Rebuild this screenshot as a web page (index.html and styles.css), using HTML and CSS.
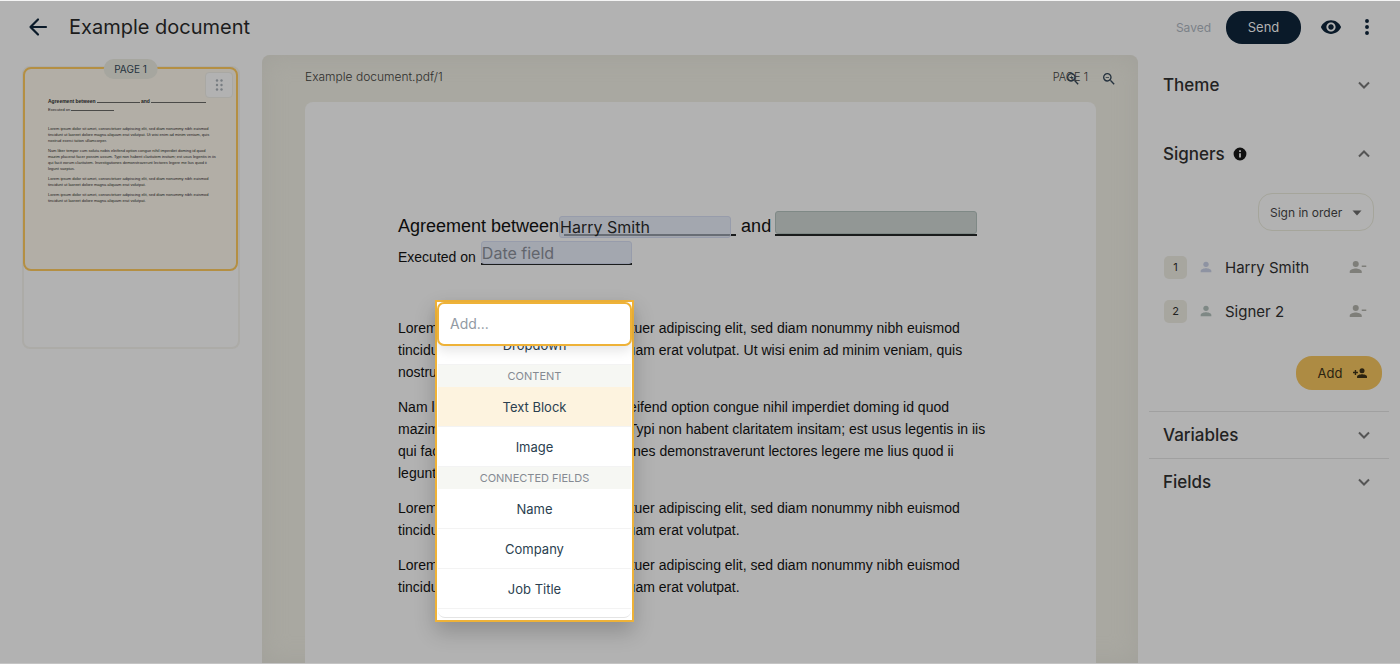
FILE: index.html
```html
<!DOCTYPE html>
<html lang="en">
<head>
<meta charset="utf-8">
<title>Example document</title>
<link rel="stylesheet" href="styles.css">
</head>
<body>
<header class="topbar">
  <button class="icon-btn back" aria-label="Back"><svg width="24" height="24" viewBox="0 0 24 24" fill="none" stroke="currentColor" stroke-width="2.2" stroke-linecap="round" stroke-linejoin="round"><path d="M20 12H4.500M12 4.500L4.500 12l7.500 7.500"/></svg></button>
  <h1 class="title">Example document</h1>
  <span class="saved">Saved</span>
  <button class="send">Send</button>
  <button class="icon-btn eye" aria-label="Preview"><svg width="22" height="22" viewBox="0 0 24 24" fill="currentColor"><path d="M12 4.500C7 4.500 2.730 7.610 1 12c1.730 4.390 6 7.500 11 7.500s9.270-3.110 11-7.500c-1.730-4.390-6-7.500-11-7.500zM12 17c-2.760 0-5-2.240-5-5s2.240-5 5-5 5 2.240 5 5-2.240 5-5 5zm0-8c-1.660 0-3 1.340-3 3s1.340 3 3 3 3-1.340 3-3-1.340-3-3-3z"/></svg></button>
  <button class="icon-btn more" aria-label="More"><svg width="22" height="22" viewBox="0 0 24 24" fill="currentColor"><circle cx="12" cy="5.500" r="2.100"/><circle cx="12" cy="12" r="2.100"/><circle cx="12" cy="18.500" r="2.100"/></svg></button>
</header>
<div class="workspace">
  <nav class="pages" aria-label="Pages">
    <div class="page-list">
      <div class="thumb">
        <span class="thumb-label">PAGE 1</span>
        <button class="drag" aria-label="Move page"><svg width="20" height="20" viewBox="0 0 20 20" fill="currentColor"><circle cx="8" cy="5.500" r="1.200"/><circle cx="12.500" cy="5.500" r="1.200"/><circle cx="8" cy="10" r="1.200"/><circle cx="12.500" cy="10" r="1.200"/><circle cx="8" cy="14.500" r="1.200"/><circle cx="12.500" cy="14.500" r="1.200"/></svg></button>
        <div class="mini">
          <p class="mini-title">Agreement between<i class="rule"></i> and<i class="rule wide"></i></p>
          <p class="mini-date">Executed on<i class="rule"></i></p>
          <p>Lorem ipsum dolor sit amet, consectetuer adipiscing elit, sed diam nonummy nibh euismod<br>tincidunt ut laoreet dolore magna aliquam erat volutpat. Ut wisi enim ad minim veniam, quis<br>nostrud exerci tation ullamcorper.</p>
          <p>Nam liber tempor cum soluta nobis eleifend option congue nihil imperdiet doming id quod<br>mazim placerat facer possim assum. Typi non habent claritatem insitam; est usus legentis in iis<br>qui facit eorum claritatem. Investigationes demonstraverunt lectores legere me lius quod ii<br>legunt saepius.</p>
          <p>Lorem ipsum dolor sit amet, consectetuer adipiscing elit, sed diam nonummy nibh euismod<br>tincidunt ut laoreet dolore magna aliquam erat volutpat.</p>
          <p>Lorem ipsum dolor sit amet, consectetuer adipiscing elit, sed diam nonummy nibh euismod<br>tincidunt ut laoreet dolore magna aliquam erat volutpat.</p>
        </div>
      </div>
    </div>
  </nav>
  <main class="canvas">
    <div class="canvas-head">
      <span>Example document.pdf/1</span>
      <span class="page-no">PAGE 1</span>
      <div class="zoom">
        <button class="icon-btn" aria-label="Zoom in"><svg width="16" height="16" viewBox="0 0 24 24" fill="currentColor"><path d="M15.500 14h-.790l-.280-.270A6.470 6.470 0 0 0 16 9.500 6.500 6.500 0 1 0 9.500 16c1.610 0 3.090-.590 4.230-1.570l.270.280v.790l5 4.990L20.490 19l-4.990-5zm-6 0C7.010 14 5 11.990 5 9.500S7.010 5 9.500 5 14 7.010 14 9.500 11.990 14 9.500 14zm2.500-4h-2v2H9v-2H7V9h2V7h1v2h2v1z"/></svg></button>
        <button class="icon-btn" aria-label="Zoom out"><svg width="16" height="16" viewBox="0 0 24 24" fill="currentColor"><path d="M15.500 14h-.790l-.280-.270A6.470 6.470 0 0 0 16 9.500 6.500 6.500 0 1 0 9.500 16c1.610 0 3.090-.590 4.230-1.570l.270.280v.790l5 4.990L20.490 19l-4.990-5zm-6 0C7.010 14 5 11.990 5 9.500S7.010 5 9.500 5 14 7.010 14 9.500 11.990 14 9.500 14zM7 9h5v1H7z"/></svg></button>
      </div>
    </div>
    <article class="paper">
      <div class="agreement">
        <label for="party1">Agreement between</label>
        <span class="blank party"><input id="party1" class="field" value="Harry Smith"></span>
        <label for="party2">and</label>
        <span class="blank party2"><input id="party2" class="field green"></span>
      </div>
      <div class="executed">
        <label for="date">Executed on</label>
        <span class="blank date"><input id="date" class="field" placeholder="Date field"></span>
      </div>
      <div class="prose">
        <p>Lorem ipsum dolor sit amet, consectetuer adipiscing elit, sed diam nonummy nibh euismod<br>tincidunt ut laoreet dolore magna aliquam erat volutpat. Ut wisi enim ad minim veniam, quis<br>nostrud exerci tation ullamcorper.</p>
        <p>Nam liber tempor cum soluta nobis eleifend option congue nihil imperdiet doming id quod<br>mazim placerat facer possim assum. Typi non habent claritatem insitam; est usus legentis in iis<br>qui facit eorum claritatem. Investigationes demonstraverunt lectores legere me lius quod ii<br>legunt saepius.</p>
        <p>Lorem ipsum dolor sit amet, consectetuer adipiscing elit, sed diam nonummy nibh euismod<br>tincidunt ut laoreet dolore magna aliquam erat volutpat.</p>
        <p>Lorem ipsum dolor sit amet, consectetuer adipiscing elit, sed diam nonummy nibh euismod<br>tincidunt ut laoreet dolore magna aliquam erat volutpat.</p>
      </div>
      <div class="adder">
        <input class="adder-input" placeholder="Add..." aria-label="Add">
        <div class="adder-list">
          <button class="option">Dropdown</button>
          <h3 class="group">CONTENT</h3>
          <button class="option active">Text Block</button>
          <button class="option">Image</button>
          <h3 class="group">CONNECTED FIELDS</h3>
          <button class="option">Name</button>
          <button class="option">Company</button>
          <button class="option">Job Title</button>
          <div class="list-end"></div>
        </div>
      </div>
    </article>
  </main>
  <aside class="settings">
    <section class="section">
      <button class="section-head"><span>Theme</span><svg class="chev" width="20" height="20" viewBox="0 0 24 24" fill="none" stroke="currentColor" stroke-width="2.400"><path d="M6 9l6 6 6-6"/></svg></button>
    </section>
    <section class="section signers">
      <button class="section-head"><span>Signers</span><svg class="info" width="14" height="14" viewBox="0 0 24 24" fill="currentColor"><path d="M12 1a11 11 0 1 0 0 22 11 11 0 0 0 0-22zm1.500 17h-3v-7.500h3zm0-9.500h-3v-3h3z"/></svg><svg class="chev" width="20" height="20" viewBox="0 0 24 24" fill="none" stroke="currentColor" stroke-width="2.400"><path d="M6 15l6-6 6 6"/></svg></button>
      <div class="order">
        <select class="order-select" aria-label="Signing order"><option>Sign in order</option></select>
        <svg class="caret" width="10" height="6" viewBox="0 0 10 6" fill="currentColor"><path d="M0.500 0.500h9L5 5.500z"/></svg>
      </div>
      <ol class="signer-list">
        <li class="signer"><span class="num">1</span><svg class="person lilac" width="16" height="16" viewBox="0 0 24 24" fill="currentColor"><circle cx="12" cy="8" r="4"/><path d="M4 20v-2c0-2.700 5.300-4 8-4s8 1.300 8 4v2z"/></svg><span class="name">Harry Smith</span><button class="icon-btn remove" aria-label="Remove Harry Smith"><svg width="18" height="18" viewBox="0 0 24 24" fill="currentColor"><circle cx="9" cy="8" r="4"/><path d="M1 20v-2c0-2.700 5.300-4 8-4s8 1.300 8 4v2zM17 10h6v2h-6z"/></svg></button></li>
        <li class="signer"><span class="num">2</span><svg class="person sage" width="16" height="16" viewBox="0 0 24 24" fill="currentColor"><circle cx="12" cy="8" r="4"/><path d="M4 20v-2c0-2.700 5.300-4 8-4s8 1.300 8 4v2z"/></svg><span class="name">Signer 2</span><button class="icon-btn remove" aria-label="Remove Signer 2"><svg width="18" height="18" viewBox="0 0 24 24" fill="currentColor"><circle cx="9" cy="8" r="4"/><path d="M1 20v-2c0-2.700 5.300-4 8-4s8 1.300 8 4v2zM17 10h6v2h-6z"/></svg></button></li>
      </ol>
      <button class="add">Add<svg width="14" height="14" viewBox="0 0 24 24" fill="currentColor"><circle cx="15.500" cy="8" r="4.300"/><path d="M7 20.500v-2.500c0-2.700 5.500-4 8.500-4s8.500 1.300 8.500 4v2.500zM3 7h2.400v3H8.400v2.400h-3v3H3v-3H0V10h3z"/></svg></button>
    </section>
    <section class="section lined">
      <button class="section-head"><span>Variables</span><svg class="chev" width="20" height="20" viewBox="0 0 24 24" fill="none" stroke="currentColor" stroke-width="2.400"><path d="M6 9l6 6 6-6"/></svg></button>
    </section>
    <section class="section lined">
      <button class="section-head"><span>Fields</span><svg class="chev" width="20" height="20" viewBox="0 0 24 24" fill="none" stroke="currentColor" stroke-width="2.400"><path d="M6 9l6 6 6-6"/></svg></button>
    </section>
  </aside>
</div>
</body>
</html>
```
FILE: styles.css
```css
* { box-sizing: border-box; }

body {
  margin: 0;
  height: 100vh;
  display: flex;
  flex-direction: column;
  overflow: hidden;
  background: #b2b2b2;
  border-top: 1px solid #f4f4f4;
  border-bottom: 1px solid #c4c4c4;
  color: #222;
  font-family: Inter, "Liberation Sans", sans-serif;
}

button, input, select { font: inherit; color: inherit; }
button { border: 0; padding: 0; background: none; cursor: pointer; }
p, h1, h3, ol { margin: 0; padding: 0; }
svg { display: block; flex: none; }

.icon-btn { display: flex; align-items: center; justify-content: center; }

.topbar {
  height: 54px;
  flex: none;
  display: flex;
  align-items: center;
  padding: 0 22px 2px 26px;
  color: #0a1a29;
}
.title { flex: 1; margin-left: 19px; font-size: 20px; font-weight: 400; color: #1c1c1c; }
.saved { font-size: 12px; color: #7b8188; }
.send {
  width: 75px;
  height: 33px;
  margin: 0 19px 0 15px;
  border-radius: 16px;
  background: #0a1a29;
  color: #b2b2b2;
  font-size: 13px;
}
.more { margin-left: 14px; }

.workspace { flex: 1; min-height: 0; display: grid; grid-template-columns: 262px 1fr 262px; }

.pages { padding: 11px 22px; }
.page-list { height: 283px; border: 2px solid #acaba7; border-radius: 8px; }
.thumb {
  position: relative;
  height: 204px;
  margin: -1px 0 0 -1px;
  border: 2px solid #b48f43;
  border-radius: 8px;
  background: #b2aea6;
}
.thumb-label {
  position: absolute;
  top: -10px;
  left: 50%;
  transform: translateX(-50%);
  padding: 0 11px;
  border-radius: 10px;
  background: #a6a69f;
  color: #25323e;
  font-size: 10px;
  line-height: 20px;
  white-space: nowrap;
}
.drag {
  position: absolute;
  top: 3px;
  right: 3px;
  width: 28px;
  height: 26px;
  display: flex;
  align-items: center;
  justify-content: center;
  border: 1px solid #a9a8a3;
  border-radius: 4px;
  background: #b2b2b2;
  color: #777d82;
}
.mini { padding: 29px 0 0 23px; font: 4px/6px "Liberation Sans", sans-serif; white-space: nowrap; color: #222; }
.mini p { margin-bottom: 4px; }
.mini .mini-title { margin-bottom: 3px; font-size: 5px; font-weight: bold; }
.mini .mini-date { margin-bottom: 13px; }
.rule { display: inline-block; width: 43px; margin-left: 1px; border-bottom: 1px solid #4a4a48; }
.rule.wide { width: 55px; }

.canvas {
  min-width: 0;
  overflow: hidden;
  display: flex;
  flex-direction: column;
  padding: 0 42px 0 43px;
  border-radius: 8px 8px 0 0;
  background: #a9a8a1;
  box-shadow: inset 0 0 24px #a1a09a;
}
.canvas-head {
  position: relative;
  height: 47px;
  flex: none;
  display: flex;
  align-items: center;
  justify-content: space-between;
  padding: 0 8px 4px 0;
  font-size: 12px;
  font-weight: 300;
  color: #2e2e2c;
}
.page-no { font-size: 11px; }
.zoom { position: absolute; top: 16px; right: -21px; display: flex; gap: 20px; color: #25323e; }

.paper {
  position: relative;
  flex: 1;
  padding: 109px 93px 0;
  border-radius: 8px 8px 0 0;
  background: #b2b2b2;
  color: #0d0d0d;
  font-family: "Liberation Sans", Arial, sans-serif;
  white-space: nowrap;
}
.agreement { display: flex; height: 32px; font-size: 18px; line-height: 30px; }
.executed { display: flex; height: 24px; font-size: 14px; line-height: 28px; }
.blank { position: relative; border-bottom: 2px solid #1a1c1c; }
.party { width: 172px; height: 25px; margin: 0 5px 0 5px; }
.party2 { width: 202px; height: 25px; margin-left: 4px; }
.date { width: 151px; height: 22px; margin-left: 5px; }
.field {
  position: absolute;
  top: -2px;
  left: 0;
  width: 100%;
  height: 23px;
  padding: 0;
  border: 1px solid #979cab;
  border-radius: 3px;
  background: rgba(154, 159, 173, .62);
  font: 16px Inter, sans-serif;
  color: #1c1c1c;
}
.field::placeholder { color: #62656c; opacity: 1; }
.party .field { top: 5px; left: -5px; height: 22px; }
.party2 .field { top: 0; height: 23px; }
.field.green { border-color: #7f8986; background: #929795; }

.prose { padding-top: 50px; font-size: 14px; line-height: 22px; }
.prose p { margin-bottom: 13px; }

.adder {
  position: absolute;
  top: 198px;
  left: 130px;
  width: 199px;
  height: 322px;
  border: 2px solid #eeb238;
  background: #fff;
  box-shadow: 0 10px 20px rgba(0, 0, 0, .2);
  font-family: Inter, sans-serif;
}
.adder-input {
  position: relative;
  z-index: 1;
  display: block;
  width: 100%;
  height: 44px;
  padding: 0 12px 2px 11px;
  border: 2px solid #eeb238;
  border-radius: 7px;
  background: #fff;
  box-shadow: 0 5px 12px rgba(0, 0, 0, .1);
  font-size: 14px;
  outline: 0;
}
.adder-input::placeholder { color: #929aa3; opacity: 1; }
.adder-list { margin: -21px 1px 0; }
.option {
  display: block;
  width: 100%;
  height: 40px;
  border-bottom: 1px solid #f3f3f3;
  color: #2b3f50;
  font-size: 13px;
}
.option.active { background: #fdf3df; }
.group {
  height: 22px;
  background: #f6f7f3;
  color: #858a92;
  font-size: 11px;
  font-weight: 400;
  line-height: 22px;
  text-align: center;
}
.list-end { height: 9px; border-bottom: 1px solid #e4e4e4; border-radius: 0 0 7px 7px; }

.settings { padding: 7px 11px; }
.section-head {
  width: 100%;
  height: 46px;
  display: flex;
  align-items: center;
  gap: 8px;
  padding: 0 15px 0 14px;
  font-size: 17px;
  font-weight: 500;
}
.chev { margin-left: auto; color: #555; }
.info { color: #111; }
.signers { display: flex; flex-direction: column; margin-top: 23px; padding-bottom: 21px; }
.order { position: relative; align-self: flex-end; margin: 16px 15px 0 0; }
.order-select {
  display: block;
  width: 116px;
  height: 38px;
  padding: 0 0 0 11px;
  appearance: none;
  border: 1px solid #a5a59b;
  border-radius: 14px;
  background: none;
  color: #303030;
  font-size: 12px;
}
.caret { position: absolute; right: 12px; top: 17px; color: #4c4c4c; pointer-events: none; }
.signer-list { list-style: none; margin: 14px 0 0; padding: 0 22px 0 15px; }
.signer { height: 44px; display: flex; align-items: center; }
.num {
  width: 23px;
  height: 23px;
  border-radius: 5px;
  background: #a7a69f;
  font-size: 11px;
  line-height: 23px;
  text-align: center;
}
.person { margin: 0 11px; }
.lilac { color: #8e93a2; }
.sage { color: #7e8885; }
.name { flex: 1; font-size: 15px; }
.remove { color: #7e7e79; }
.add {
  align-self: flex-end;
  width: 86px;
  height: 34px;
  margin: 23px 7px 0 0;
  display: flex;
  align-items: center;
  justify-content: center;
  gap: 11px;
  padding-left: 7px;
  border-radius: 16px;
  background: #ad8b43;
  color: #2b2310;
  font-size: 13px;
}
.lined { border-top: 1px solid #a0a0a0; }
```
